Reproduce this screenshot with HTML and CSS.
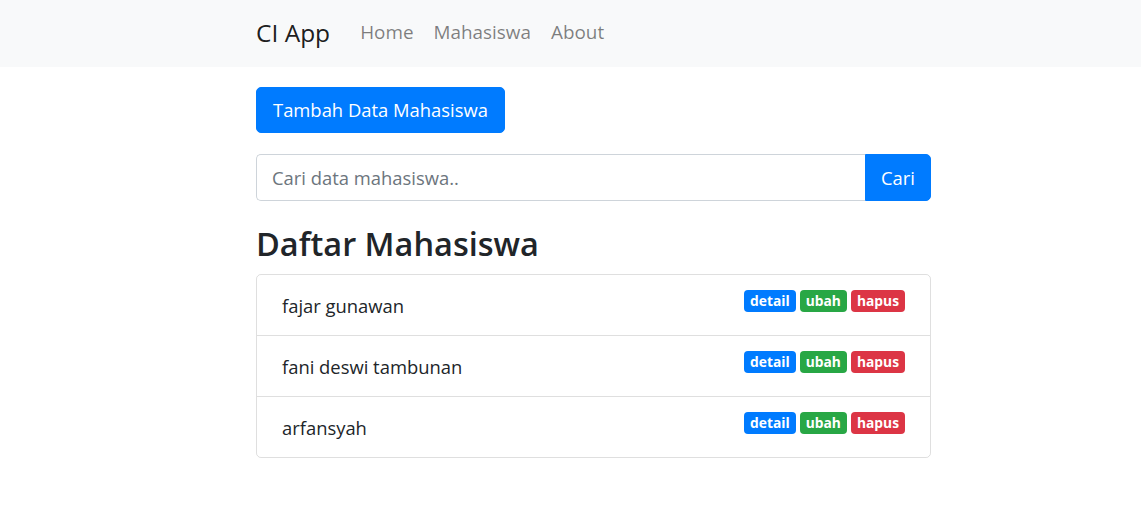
FILE: index.html
```html
<!DOCTYPE html>
<html lang="id">
<head>
<meta charset="utf-8">
<title>CI App</title>
<link rel="stylesheet" href="styles.css">
</head>
<body>
<nav class="navbar">
  <div class="container nav-inner">
    <a class="brand" href="#">CI App</a>
    <div class="nav-links">
      <a class="nav-link" href="#">Home</a>
      <a class="nav-link" href="#">Mahasiswa</a>
      <a class="nav-link" href="#">About</a>
    </div>
  </div>
</nav>
<main class="container main">
  <a class="btn btn-primary" href="#">Tambah Data Mahasiswa</a>
  <form class="input-group">
    <input class="form-control" type="text" placeholder="Cari data mahasiswa..">
    <button class="btn btn-primary btn-append" type="button">Cari</button>
  </form>
  <h3 class="title">Daftar Mahasiswa</h3>
  <ul class="list-group">
    <li class="list-item"><span class="name">fajar gunawan</span><span class="badges"><a class="badge b-blue" href="#">detail</a> <a class="badge b-green" href="#">ubah</a> <a class="badge b-red" href="#">hapus</a></span></li>
    <li class="list-item"><span class="name">fani deswi tambunan</span><span class="badges"><a class="badge b-blue" href="#">detail</a> <a class="badge b-green" href="#">ubah</a> <a class="badge b-red" href="#">hapus</a></span></li>
    <li class="list-item"><span class="name">arfansyah</span><span class="badges"><a class="badge b-blue" href="#">detail</a> <a class="badge b-green" href="#">ubah</a> <a class="badge b-red" href="#">hapus</a></span></li>
  </ul>
</main>
</body>
</html>
```
FILE: styles.css
```css
* { box-sizing: border-box; }
body {
  margin: 0;
  font-family: "Open Sans", "Noto Sans", sans-serif;
  font-size: 18.4px;
  line-height: 1.5;
  color: #212529;
  background: #fff;
}
a { text-decoration: none; }
.container {
  width: 675px;
  margin-left: calc(50% - 314.5px);
}
.navbar {
  background: #f8f9fa;
  height: 67px;
}
.nav-inner {
  display: flex;
  align-items: center;
  height: 67px;
  padding-bottom: 2px;
}
.brand {
  font-size: 24.5px;
  color: rgba(0,0,0,.9);
  margin-right: 20px;
  line-height: 30px;
}
.nav-links { display: flex; }
.nav-link {
  font-size: 18.9px;
  color: rgba(0,0,0,.5);
  padding: 0 10px;
  line-height: 29px;
}
.main { padding-top: 20px; }
.btn {
  display: inline-block;
  font: inherit;
  border: 1px solid #007bff;
  border-radius: 5px;
  padding: 0 16px;
  height: 46px;
  line-height: 44px;
  cursor: pointer;
}
.btn-primary { background: #007bff; color: #fff; }
.input-group {
  display: flex;
  margin: 21px 0 23px;
  height: 47px;
}
.form-control {
  flex: 1;
  min-width: 0;
  font: inherit;
  color: #495057;
  border: 1px solid #ced4da;
  border-right: 0;
  border-radius: 5px 0 0 5px;
  padding: 0 15px;
  height: 47px;
  outline: none;
}
.form-control::placeholder { color: #6c757d; }
.btn-append {
  width: 66px;
  height: 47px;
  padding: 0;
  border-radius: 0 5px 5px 0;
}
.title {
  margin: 0 0 10px;
  font-size: 32.5px;
  font-weight: 600;
  line-height: 40px;
}
.list-group {
  list-style: none;
  margin: 0;
  padding: 0;
  border: 1px solid rgba(0,0,0,.125);
  border-radius: 5px;
}
.list-item {
  display: flex;
  justify-content: space-between;
  align-items: flex-start;
  height: 61px;
  padding: 15px 24px 0 25px;
  border-top: 1px solid rgba(0,0,0,.125);
}
.list-item:first-child { border-top: 0; height: 60px; }
.name { line-height: 32px; }
.badges { font-size: 0; display: flex; gap: 4px; margin-right: 1px; }
.badge {
  display: inline-block;
  font-size: 13.8px;
  font-weight: 700;
  line-height: 22px;
  height: 22px;
  padding: 0 6px;
  border-radius: 4px;
  color: #fff;
}
.b-blue { background: #007bff; }
.b-green { background: #28a745; }
.b-red { background: #dc3545; }
```
